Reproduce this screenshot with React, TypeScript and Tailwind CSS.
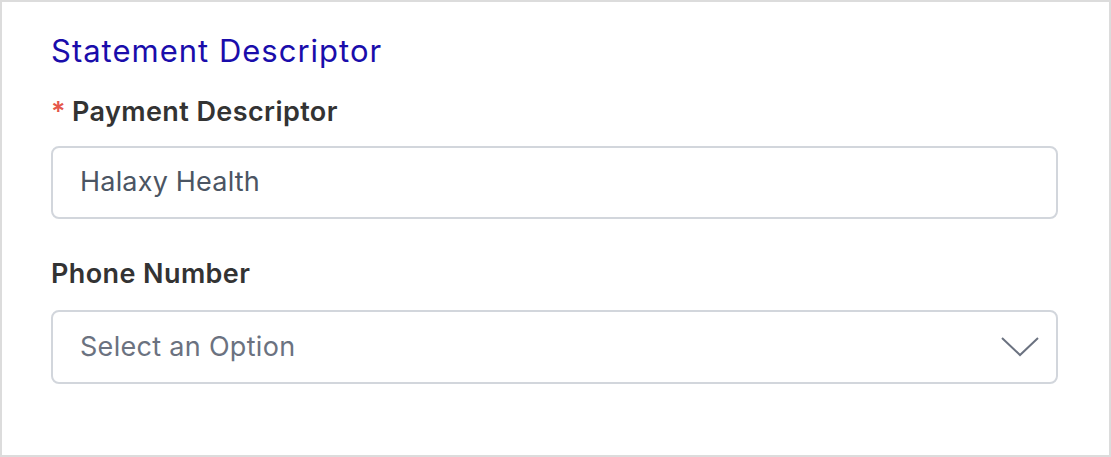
import React from 'react';

export default function App() {
  return (
    <div className="w-[1111px] h-[457px] bg-white border-2 border-[#dcdcdc] pl-[49px] pr-[51px] pt-[29px] font-['Inter',sans-serif]">
      <h2 className="text-[31px] leading-[40px] tracking-[1px] text-[#1a0dab] font-normal">Statement Descriptor</h2>
      <div className="mt-[24px] flex items-center text-[27px] leading-[34px] font-semibold tracking-[0.4px] text-[#333333]">
        <span className="text-[#e5574b] mr-[6px]">*</span>
        <span>Payment Descriptor</span>
      </div>
      <div className="mt-[17px] h-[73px] rounded-[8px] border-2 border-[#d2d6dc] flex items-center px-[27px] text-[27px] tracking-[0.2px] text-[#4b5563]">
        Halaxy Health
      </div>
      <div className="mt-[38px] text-[27px] leading-[34px] font-semibold tracking-[0.4px] text-[#333333]">Phone Number</div>
      <div className="mt-[19px] h-[74px] rounded-[8px] border-2 border-[#d2d6dc] flex items-center justify-between pl-[27px] pr-[17px] text-[27px] tracking-[0.3px] text-[#6b7280]">
        <span>Select an Option</span>
        <svg width="38" height="20" viewBox="0 0 38 20" fill="none" stroke="#6b7280" strokeWidth="2">
          <path d="M1 1 L19 18 L37 1" />
        </svg>
      </div>
    </div>
  );
}
